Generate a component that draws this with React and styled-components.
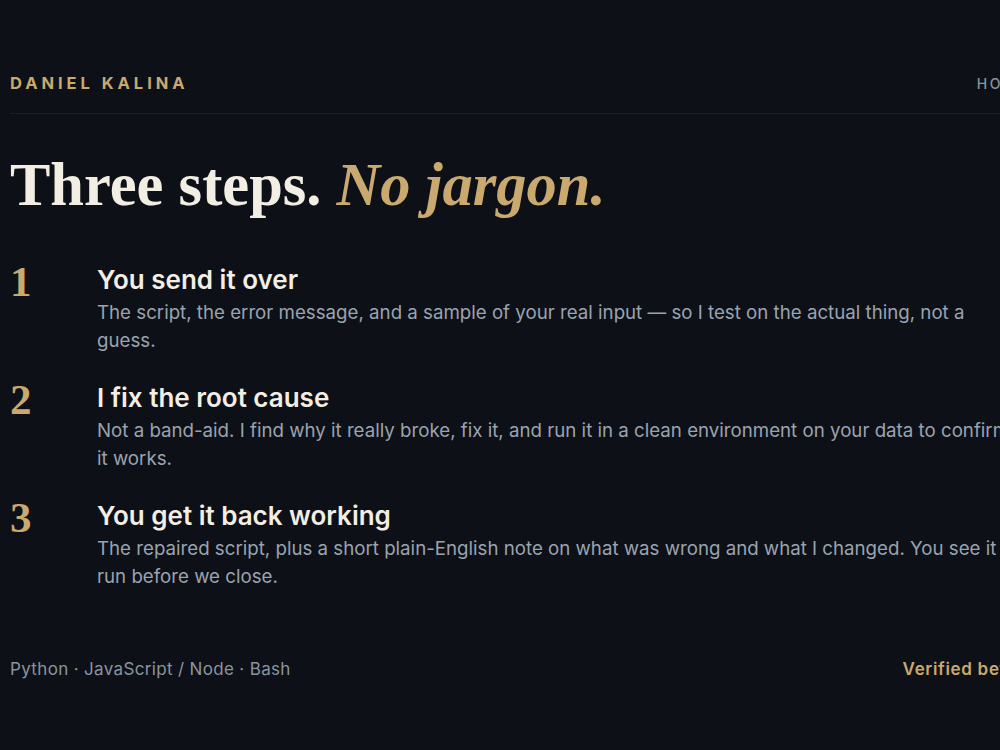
import React from 'react'
import styled, { createGlobalStyle } from 'styled-components'

const GlobalStyle = createGlobalStyle`
  html, body {
    margin: 0;
    padding: 0;
    background: #0d1117;
    overflow: hidden;
  }
  body {
    font-family: Inter, "Noto Sans", sans-serif;
    -webkit-font-smoothing: antialiased;
  }
`

const steps = [
  {
    n: '1',
    title: 'You send it over',
    text: 'The script, the error message, and a sample of your real input — so I test on the actual thing, not a guess.',
  },
  {
    n: '2',
    title: 'I fix the root cause',
    text: 'Not a band-aid. I find why it really broke, fix it, and run it in a clean environment on your data to confirm it works.',
  },
  {
    n: '3',
    title: 'You get it back working',
    text: 'The repaired script, plus a short plain-English note on what was wrong and what I changed. You see it run before we close.',
  },
]

function App() {
  return (
    <>
      <GlobalStyle />
      <Page>
        <Header>
          <Brand>Daniel Kalina</Brand>
          <Nav>
            <NavLink>How it works</NavLink>
          </Nav>
        </Header>

        <Headline>
          Three steps. <em>No jargon.</em>
        </Headline>

        <Steps>
          {steps.map(({ n, title, text }) => (
            <Step key={n}>
              <StepNumber>{n}</StepNumber>
              <StepBody>
                <StepTitle>{title}</StepTitle>
                <StepText>{text}</StepText>
              </StepBody>
            </Step>
          ))}
        </Steps>

        <Footer>
          <Langs>Python · JavaScript / Node · Bash</Langs>
          <Verified>Verified before delivery</Verified>
        </Footer>
      </Page>
    </>
  )
}

const Page = styled.div`
  width: 1102px;
  padding: 66px 0 60px 10px;
`

const Header = styled.header`
  display: flex;
  align-items: center;
  justify-content: space-between;
  padding-bottom: 13px;
  border-bottom: 1px solid #1c2129;
`

const Brand = styled.div`
  font-size: 16.5px;
  font-weight: 700;
  letter-spacing: 0.24em;
  text-transform: uppercase;
  color: #c9a96e;
  line-height: 34px;
`

const Nav = styled.nav`
  display: flex;
  gap: 28px;
  margin-right: -6px;
`

const NavLink = styled.span`
  font-size: 14px;
  font-weight: 500;
  letter-spacing: 0.2em;
  text-transform: uppercase;
  color: #8b949e;
`

const Headline = styled.h1`
  margin: 36px 0 0;
  font-family: "Liberation Serif", "Times New Roman", serif;
  font-weight: 700;
  font-size: 60.5px;
  line-height: 1.15;
  color: #f3eee4;
  letter-spacing: 0;

  em {
    font-style: italic;
    color: #c9a96e;
  }
`

const Steps = styled.ol`
  list-style: none;
  margin: 44px 0 0;
  padding: 0;
  display: flex;
  flex-direction: column;
  gap: 27px;
`

const Step = styled.li`
  display: grid;
  grid-template-columns: 87px 925px;
`

const StepNumber = styled.span`
  font-family: "Liberation Serif", "Times New Roman", serif;
  font-size: 43px;
  font-weight: 700;
  line-height: 0.7;
  color: #c9a96e;
  padding-top: 3px;
`

const StepBody = styled.div`
  display: flex;
  flex-direction: column;
`

const StepTitle = styled.h3`
  margin: 0;
  font-size: 26px;
  font-weight: 600;
  line-height: 32px;
  color: #f3eee4;
`

const StepText = styled.p`
  margin: 3px 0 0;
  font-size: 18.7px;
  line-height: 28px;
  color: #9aa3b0;
`

const Footer = styled.footer`
  display: flex;
  justify-content: space-between;
  align-items: center;
  margin-top: 68px;
`

const Langs = styled.span`
  font-size: 17px;
  color: #8b949e;
  letter-spacing: 0.02em;
`

const Verified = styled.span`
  font-size: 17px;
  font-weight: 600;
  color: #c9a96e;
  letter-spacing: 0.04em;
`

export default App
